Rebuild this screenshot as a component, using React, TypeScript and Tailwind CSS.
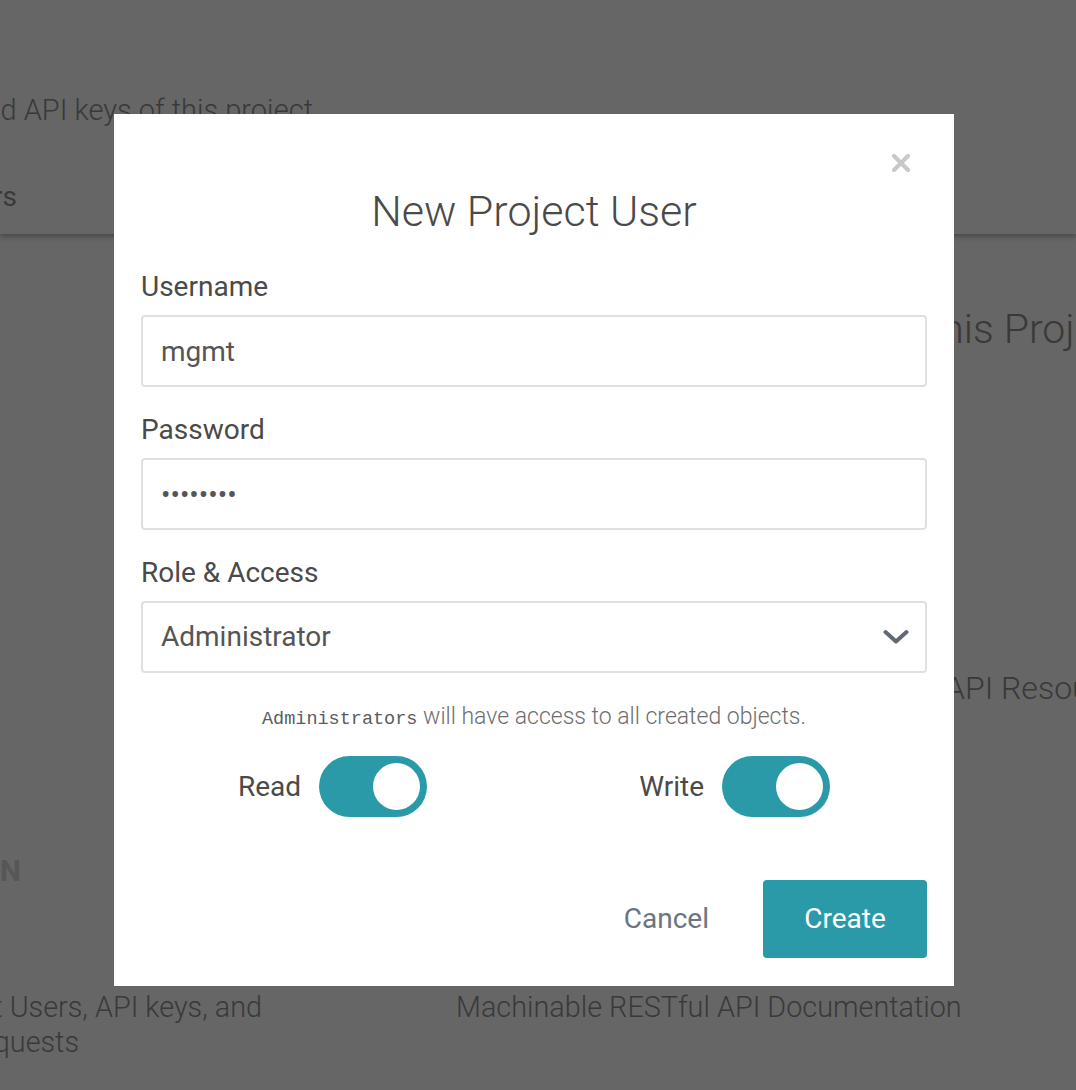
import React from "react";

function Backdrop() {
  return (
    <div className="text-[#393939]">
      {/* Page header */}
      <header className="h-[234px] shadow-[0_3px_5px_rgba(0,0,0,0.28)]">
        <div className="flex w-[313px] justify-end pt-[92px]">
          <p className="shrink-0 whitespace-nowrap text-[29px] font-light leading-[36px]">
            Manage the users and API keys of this project
          </p>
        </div>
        <div className="mt-[51px] flex w-[17px] justify-end">
          <span className="shrink-0 whitespace-nowrap text-[28px] leading-[36px]">
            Users
          </span>
        </div>
      </header>

      {/* Page body */}
      <h2 className="ml-[928px] mt-[71px] whitespace-nowrap text-[41px] font-light leading-[48px]">
        this Project Users
      </h2>
      <h3 className="ml-[945px] mt-[315px] whitespace-nowrap text-[32px] font-light leading-[40px]">
        API Resources
      </h3>
      <div className="mt-[145px] flex w-[21px] justify-end">
        <span className="shrink-0 whitespace-nowrap text-[30px] font-bold leading-[36px] text-[#575757]">
          AUTHENTICATION
        </span>
      </div>
      <div className="mt-[101px] flex text-[28.8px] font-light leading-[35px]">
        <div className="w-[456px] shrink-0">
          <div className="flex w-[262px] justify-end">
            <span className="shrink-0 whitespace-nowrap">
              Manage Project Users, API keys, and
            </span>
          </div>
          <div className="flex w-[79px] justify-end">
            <span className="shrink-0 whitespace-nowrap">requests</span>
          </div>
        </div>
        <p className="whitespace-nowrap">Machinable RESTful API Documentation</p>
      </div>
    </div>
  );
}

function Field({ label, children }: { label: string; children: React.ReactNode }) {
  return (
    <label className="block">
      <span className="block text-[28px] leading-[32px] text-[#4a4a4a]">{label}</span>
      <div className="relative mt-[12px]">{children}</div>
    </label>
  );
}

const inputClass =
  "block h-[72px] w-full rounded-[4px] border-2 border-[#e0e0e4] bg-white pl-[18px] pr-[18px] text-[28px] text-[#555555] outline-none";

function Toggle({ label }: { label: string }) {
  return (
    <div className="flex items-center gap-[18px]">
      <span className="text-[28px] leading-[32px] text-[#4a4a4a]">{label}</span>
      <button
        type="button"
        role="switch"
        aria-checked="true"
        className="flex h-[61px] w-[108px] items-center justify-end rounded-full bg-[#2a9aa8] pr-[7px]"
      >
        <span className="h-[47px] w-[47px] rounded-full bg-white" />
      </button>
    </div>
  );
}

function NewUserModal() {
  return (
    <div className="absolute left-[114px] top-[114px] w-[840px] bg-white px-[27px] pb-[28px] pt-[72px]">
      {/* Close */}
      <button type="button" aria-label="Close" className="absolute right-[44px] top-[40px]">
        <svg width="18" height="18" viewBox="0 0 18 18">
          <path d="M2 2 L16 16 M16 2 L2 16" stroke="#c8c8c8" strokeWidth="4.2" strokeLinecap="round" />
        </svg>
      </button>

      <h1 className="text-center text-[43px] font-light leading-[50px] text-[#4a4a4a]">
        New Project User
      </h1>

      <div className="mt-[35px] flex flex-col gap-[27px]">
        <Field label="Username">
          <input className={inputClass} defaultValue="mgmt" readOnly />
        </Field>
        <Field label="Password">
          <input type="password" className={inputClass} defaultValue="12345678" readOnly />
        </Field>
        <Field label="Role & Access">
          <select className={inputClass + " appearance-none"} defaultValue="admin">
            <option value="admin">Administrator</option>
            <option value="user">User</option>
          </select>
          <svg
            className="pointer-events-none absolute right-[18px] top-1/2 -translate-y-1/2"
            width="26"
            height="15"
            viewBox="0 0 26 15"
          >
            <path d="M2.5 2.5 L13 12 L23.5 2.5" fill="none" stroke="#5f6a75" strokeWidth="4" strokeLinecap="round" strokeLinejoin="round" />
          </svg>
        </Field>
      </div>

      <p className="mt-[30px] text-center text-[23px] font-light leading-[28px] text-[#6e6e6e]">
        <code className="font-['Liberation_Mono',monospace] text-[18.5px] text-[#5c5c5c]">Administrators</code>{" "}
        will have access to all created objects.
      </p>

      <div className="mt-[22px] flex justify-center gap-[212px]">
        <Toggle label="Read" />
        <Toggle label="Write" />
      </div>

      <div className="mt-[63px] flex items-center justify-end gap-[54px]">
        <button type="button" className="text-[28px] leading-[32px] text-[#6b7580]">
          Cancel
        </button>
        <button
          type="button"
          className="h-[78px] w-[164px] rounded-[4px] bg-[#2a9aa8] text-[28px] text-white"
        >
          Create
        </button>
      </div>
    </div>
  );
}

export default function App() {
  return (
    <div className="relative h-[1090px] w-full overflow-hidden bg-[#666666] font-['Roboto','Liberation_Sans',sans-serif]">
      <Backdrop />
      <NewUserModal />
    </div>
  );
}
